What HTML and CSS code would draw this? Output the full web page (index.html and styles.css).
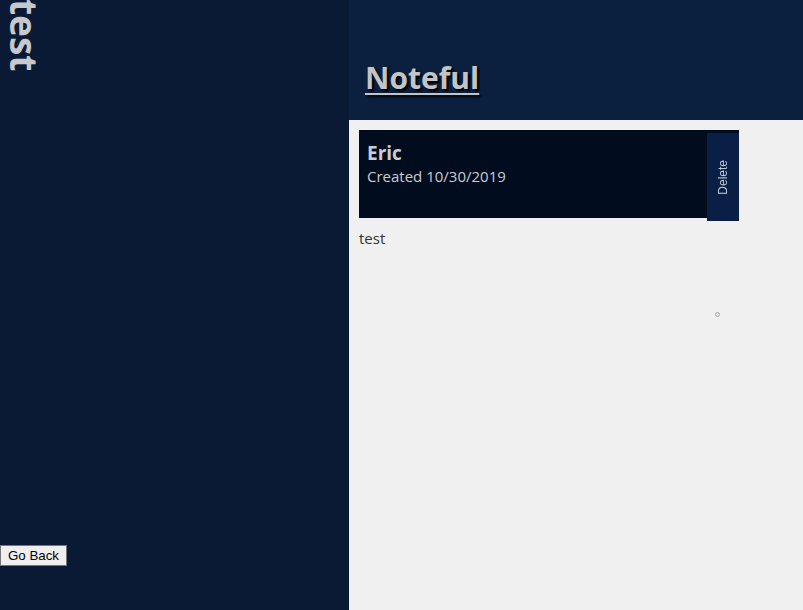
FILE: index.html
```html
<!DOCTYPE html>
<html>
<head>
<meta charset="utf-8">
<link rel="stylesheet" href="styles.css">
</head>
<body>
<div class="app">
  <nav class="sidebar">
    <h2 class="folder-name">test</h2>
    <button class="back-btn">Go Back</button>
  </nav>
  <div class="main">
    <header class="header">
      <h1 class="logo"><a href="#">Noteful</a></h1>
    </header>
    <section class="content">
      <div class="note-card">
        <div class="note-info">
          <h2 class="note-title">Eric</h2>
          <p class="note-date">Created 10/30/2019</p>
        </div>
        <button class="delete-btn"><span>Delete</span></button>
      </div>
      <p class="note-body">test</p>
      <span class="dot"></span>
    </section>
  </div>
</div>
</body>
</html>
```
FILE: styles.css
```css
html, body {
  margin: 0;
  padding: 0;
  height: 100%;
}
body {
  font-family: "Open Sans", "Noto Sans", sans-serif;
  background: #f0f0f0;
}
.app {
  display: flex;
  height: 610px;
}
.sidebar {
  width: 349px;
  flex: none;
  background: #0b1a34;
  display: flex;
  flex-direction: column;
  align-items: flex-start;
  padding-bottom: 44px;
  box-sizing: border-box;
}
.folder-name {
  writing-mode: vertical-rl;
  margin: -1px 0 0 4px;
  font-size: 37px;
  font-weight: 700;
  color: #c6c8cc;
  line-height: 40px;
}
.back-btn {
  margin-top: auto;
  font-family: "Liberation Sans", Arial, sans-serif;
  font-size: 13.3px;
  color: #000;
  background: #efefef;
  border: 1px solid #767676;
  border-radius: 0;
  padding: 2px 7px 2px 7px;
  height: 21px;
  line-height: 15px;
}
.main {
  flex: 1;
  display: flex;
  flex-direction: column;
}
.header {
  height: 120px;
  background: #0b1f3f;
  display: flex;
  align-items: flex-end;
  padding-left: 16px;
  box-sizing: border-box;
}
.logo {
  margin: 0 0 22px;
  font-size: 30px;
  font-weight: 700;
  line-height: 40px;
}
.logo a {
  color: #c4c4c4;
  text-decoration: underline;
  text-decoration-thickness: 2px;
  text-underline-offset: 4px;
  text-shadow: 2px 2px 2px #000;
}
.content {
  flex: 1;
  padding: 10px;
  position: relative;
}
.note-card {
  width: 380px;
  height: 88px;
  background: #010c1e;
  display: flex;
  align-items: flex-start;
  box-sizing: border-box;
}
.note-info {
  flex: 1;
  padding: 10px 8px;
}
.note-title {
  margin: 0;
  font-size: 19px;
  font-weight: 700;
  color: #c9ccd2;
  line-height: 26px;
}
.note-date {
  margin: 0;
  font-size: 15px;
  color: #c9ccd2;
  line-height: 20px;
}
.delete-btn {
  width: 32px;
  height: 88px;
  margin-top: 3px;
  background: #0a1f45;
  border: none;
  padding: 0;
  display: flex;
  align-items: center;
  justify-content: center;
  font-family: "Liberation Sans", Arial, sans-serif;
  font-size: 12px;
  color: #c5cddb;
}
.delete-btn span {
  writing-mode: vertical-rl;
  transform: rotate(180deg);
}
.note-body {
  margin: 10px 0 0;
  font-size: 15px;
  color: #333;
  line-height: 20px;
}
.dot {
  position: absolute;
  left: 366px;
  top: 192px;
  width: 3px;
  height: 3px;
  border: 1px solid #a0a4aa;
  border-radius: 50%;
}
```
